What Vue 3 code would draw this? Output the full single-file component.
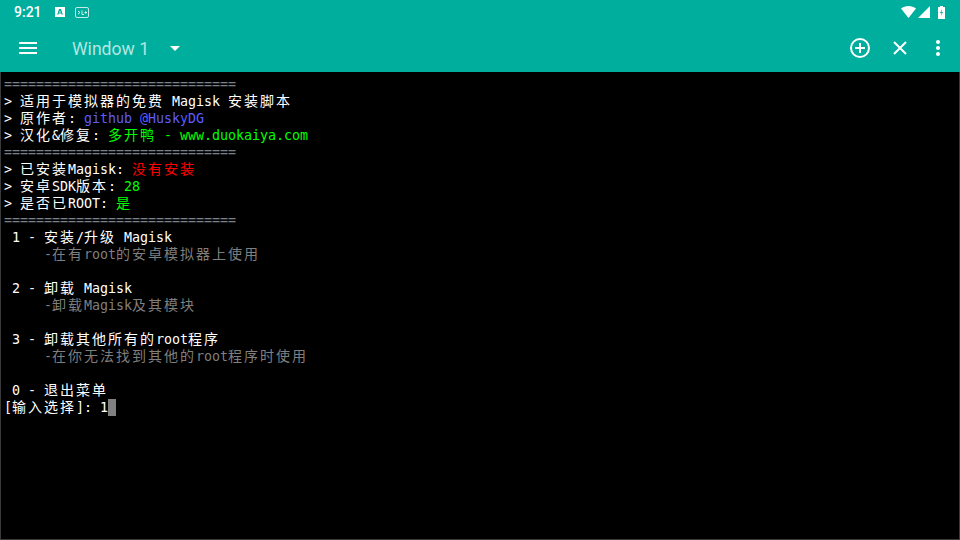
<script setup>
const sep = '============================='
const rows = [
  [[sep, 'sep']],
  [['> 适用于模拟器的免费 Magisk 安装脚本', 'w']],
  [['> 原作者: ', 'w'], ['github @HuskyDG', 'b']],
  [['> 汉化&修复: ', 'w'], ['多开鸭 - www.duokaiya.com', 'g']],
  [[sep, 'sep']],
  [['> 已安装Magisk: ', 'w'], ['没有安装', 'r']],
  [['> 安卓SDK版本: ', 'w'], ['28', 'g']],
  [['> 是否已ROOT: ', 'w'], ['是', 'g']],
  [[sep, 'sep']],
  [[' 1 - 安装/升级 Magisk', 'w']],
  [['     -在有root的安卓模拟器上使用', 'd']],
  [],
  [[' 2 - 卸载 Magisk', 'w']],
  [['     -卸载Magisk及其模块', 'd']],
  [],
  [[' 3 - 卸载其他所有的root程序', 'w']],
  [['     -在你无法找到其他的root程序时使用', 'd']],
  [],
  [[' 0 - 退出菜单', 'w']],
  [['[输入选择]: 1', 'w']],
]
const wide = (c) => c.charCodeAt(0) > 0x2e7f
const cells = (row) => row.flatMap(([t, k]) => [...t].map((c) => ({ c, k, w: wide(c) })))
const parsed = rows.map(cells)
</script>

<template>
  <div class="screen">
    <div class="status">
      <span class="time">9:21</span>
      <svg class="note" width="10" height="10" viewBox="0 0 10 10"><path fill="#fff" fill-rule="evenodd" d="M0 0h10v10H0zM4 2 2.200 7.500h1.300l.3-1h2.400l.3 1h1.300L6 2zm1 1.600.8 2H4.200z"/></svg>
      <svg class="note2" width="14" height="11" viewBox="0 0 14 11"><rect x=".5" y=".5" width="13" height="10" rx="1.500" fill="none" stroke="#c4ebe6"/><path d="M3 4l2 1.500-2 1.500M7 3.500v4M7 7.500h2M9.500 5.500h2.500M10.700 4.300v2.500" fill="none" stroke="#fff" stroke-width=".8"/></svg>
      <span class="grow"></span>
      <svg width="15" height="12" viewBox="0 0 15 12"><path fill="#fff" d="M0 2.500C2 .9 4.700 0 7.500 0s5.500.9 7.500 2.500L7.500 12z"/></svg>
      <svg class="sig" width="12" height="12" viewBox="0 0 12 12"><path fill="#fff" d="M12 0v12H0z"/></svg>
      <svg class="bat" width="7" height="13" viewBox="0 0 7 13"><path fill="#fff" d="M2 0h3v1h2v12H0V1h2z"/><path fill="#00ae9d" d="M4 3 2 7h1.500L3 10l2-4H3.500z"/></svg>
    </div>
    <div class="toolbar">
      <svg class="menu" width="18" height="12" viewBox="0 0 18 12"><path fill="#fff" d="M0 0h18v2H0zM0 5h18v2H0zM0 10h18v2H0z"/></svg>
      <span class="title">Window 1</span>
      <svg class="caret" width="10" height="5" viewBox="0 0 10 5"><path fill="#fff" d="M0 0h10L5 5z"/></svg>
      <span class="grow"></span>
      <svg class="plus" width="20" height="20" viewBox="0 0 20 20"><circle cx="10" cy="10" r="9" fill="none" stroke="#fff" stroke-width="2"/><path fill="#fff" d="M9 5h2v4h4v2h-4v4H9v-4H5V9h4z"/></svg>
      <svg class="close" width="14" height="14" viewBox="0 0 14 14"><path d="M1 1l12 12M13 1 1 13" stroke="#fff" stroke-width="2" fill="none"/></svg>
      <svg class="more" width="4" height="16" viewBox="0 0 4 16"><circle cx="2" cy="2" r="2" fill="#fff"/><circle cx="2" cy="8" r="2" fill="#fff"/><circle cx="2" cy="14" r="2" fill="#fff"/></svg>
    </div>
    <div class="term">
      <div v-for="(row, i) in parsed" :key="i" class="row">
        <span v-for="(cell, j) in row" :key="j" class="cell" :class="[cell.k, { wide: cell.w }]">{{ cell.c }}</span>
        <span v-if="i === parsed.length - 1" class="cursor"></span>
      </div>
    </div>
  </div>
</template>

<style>
html, body { margin: 0; background: #000; }
</style>

<style scoped>
.screen { width: 960px; height: 540px; display: flex; flex-direction: column; background: #000; overflow: hidden; }
.status { height: 24px; flex: none; background: #00ae9d; display: flex; align-items: center; padding: 0 15px 0 14px; box-sizing: border-box; }
.time { font: 500 14px Roboto, sans-serif; color: #fff; width: 41px; }
.note { margin-right: 10px; }
.grow { flex: 1; }
.sig { margin: 0 8px 0 2px; }
.toolbar { height: 48px; flex: none; background: #00ae9d; display: flex; align-items: center; padding: 0 20px 0 19px; box-sizing: border-box; }
.title { font: 400 17.6px Roboto, sans-serif; color: #b3e6e1; margin: 2px 0 0 35px; }
.caret { margin-left: 21px; }
.plus { margin-right: 23px; }
.close { margin-right: 29px; }
.term { flex: 1; border: 1px solid #3a3a3a; border-top: 0; padding: 4px 0 0 3px; font: 13.33px/17px "DejaVu Sans Mono", "Noto Sans CJK SC", monospace; }
.row { height: 17px; display: flex; align-items: baseline; white-space: pre; }
.cell { width: 8px; flex: none; }
.cell.wide { width: 16px; font-family: "Noto Sans CJK SC", sans-serif; font-size: 14px; line-height: 15px; }
.w { color: #fff; }
.sep { color: #808080; }
.b { color: #5c5cff; }
.g { color: #00ff00; }
.r { color: #ff0000; }
.d { color: #7f7f7f; }
.cursor { width: 8px; height: 17px; background: #808080; align-self: flex-start; }
</style>
